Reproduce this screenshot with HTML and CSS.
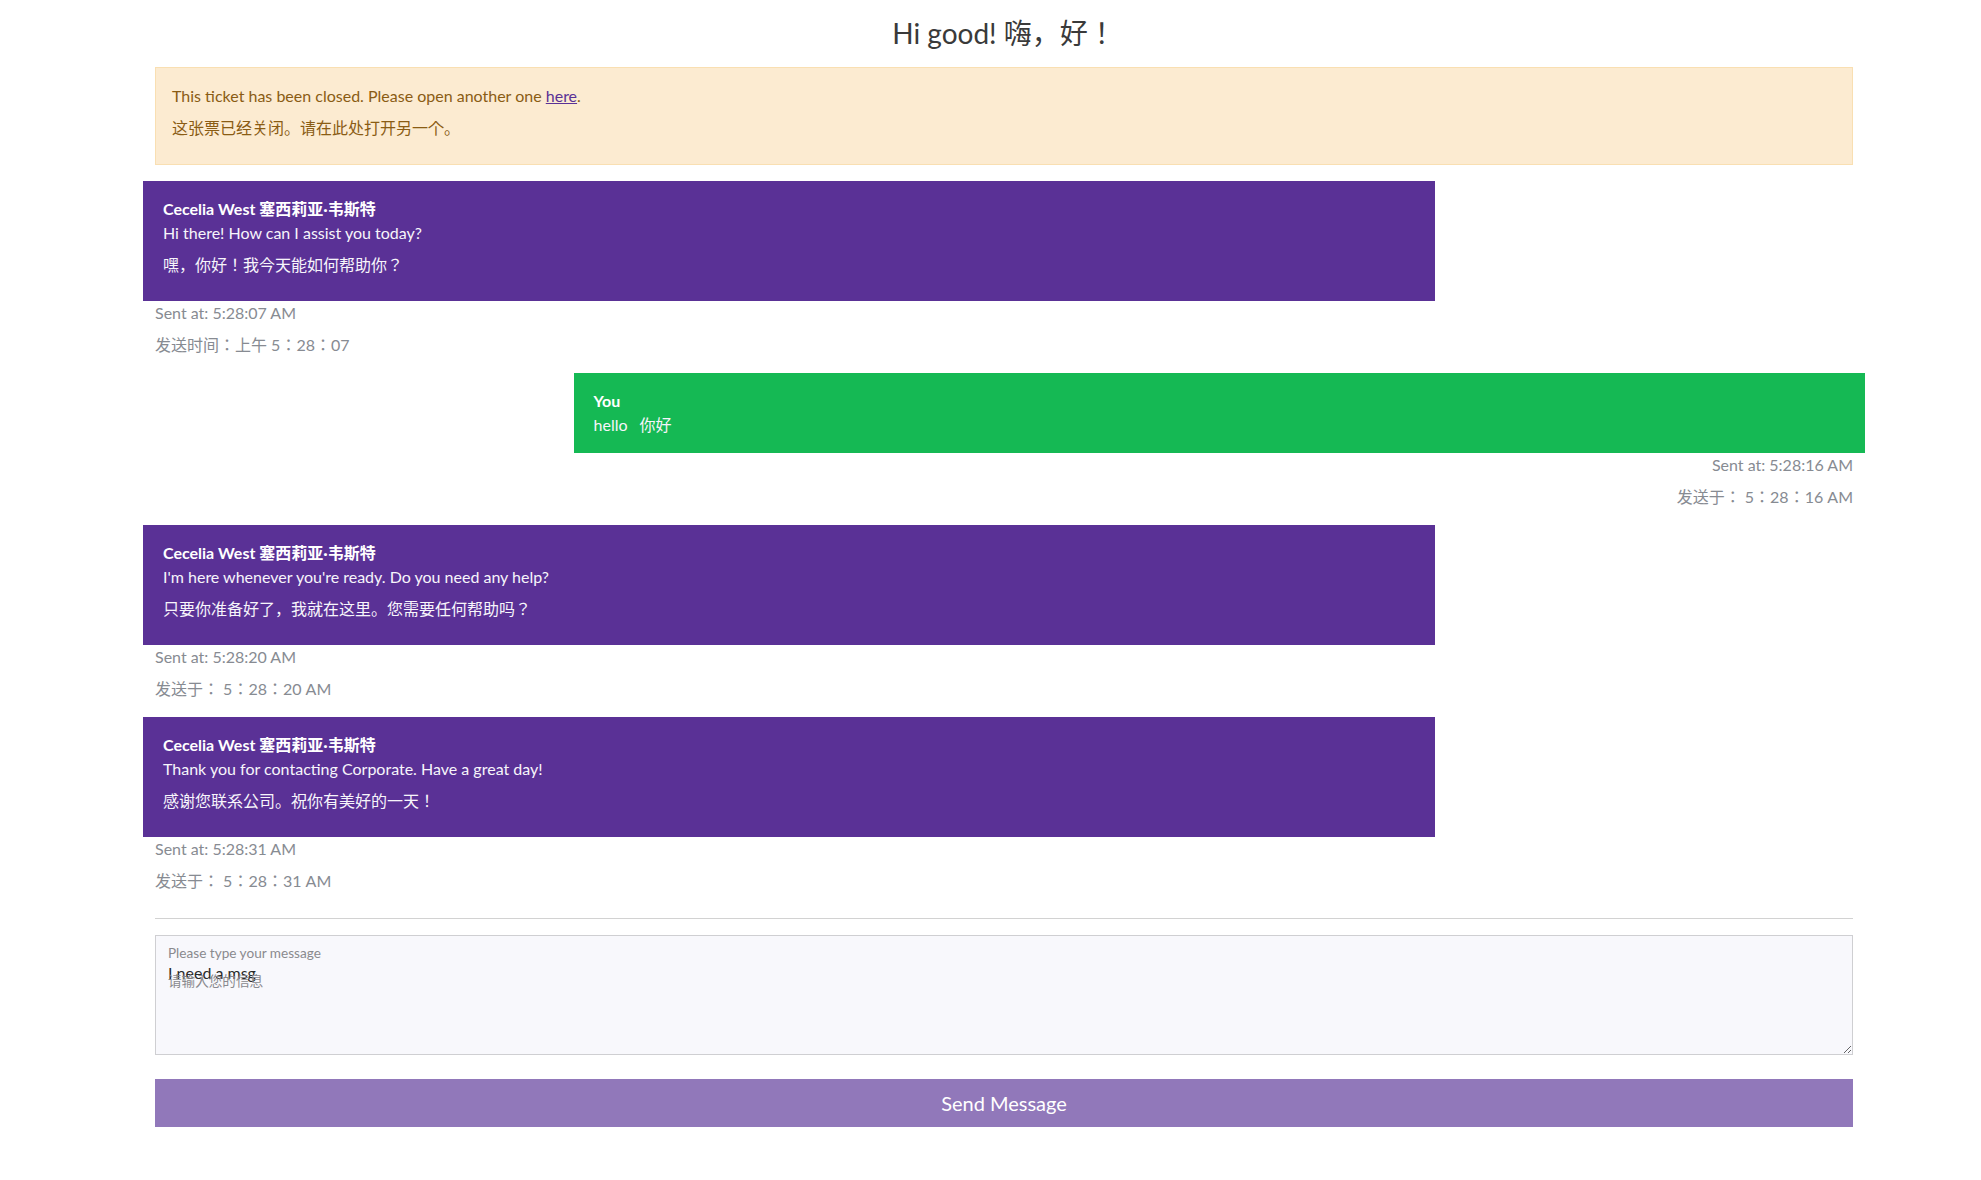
FILE: index.html
```html
<!DOCTYPE html>
<html lang="en">
<head>
<meta charset="utf-8">
<title>Ticket chat</title>
<link rel="stylesheet" href="styles.css">
</head>
<body>
<div class="page">
  <h3 class="title">Hi good! 嗨，好！</h3>

  <div class="alert">
    <p class="alert-line">This ticket has been closed. Please open another one <a href="#" class="alert-link">here</a>.</p>
    <p class="alert-line alert-cn">这张票已经关闭。请在此处打开另一个。</p>
  </div>

  <div class="chat">
    <div class="group">
      <div class="row row-left">
        <div class="bubble bubble-agent">
          <div class="name">Cecelia West 塞西莉亚·韦斯特</div>
          <p class="text">Hi there! How can I assist you today?</p>
          <p class="text trans">嘿，你好！我今天能如何帮助你？</p>
        </div>
      </div>
      <div class="meta">
        <p class="stamp">Sent at: 5:28:07 AM</p>
        <p class="stamp stamp-cn">发送时间：上午 5：28：07</p>
      </div>
    </div>

    <div class="group">
      <div class="row row-right">
        <div class="bubble bubble-user">
          <div class="name">You</div>
          <p class="text">hello<span class="inline-trans">你好</span></p>
        </div>
      </div>
      <div class="meta meta-right">
        <p class="stamp">Sent at: 5:28:16 AM</p>
        <p class="stamp stamp-cn">发送于： 5：28：16 AM</p>
      </div>
    </div>

    <div class="group">
      <div class="row row-left">
        <div class="bubble bubble-agent">
          <div class="name">Cecelia West 塞西莉亚·韦斯特</div>
          <p class="text">I'm here whenever you're ready. Do you need any help?</p>
          <p class="text trans">只要你准备好了，我就在这里。您需要任何帮助吗？</p>
        </div>
      </div>
      <div class="meta">
        <p class="stamp">Sent at: 5:28:20 AM</p>
        <p class="stamp stamp-cn">发送于： 5：28：20 AM</p>
      </div>
    </div>

    <div class="group">
      <div class="row row-left">
        <div class="bubble bubble-agent">
          <div class="name">Cecelia West 塞西莉亚·韦斯特</div>
          <p class="text">Thank you for contacting Corporate. Have a great day!</p>
          <p class="text trans">感谢您联系公司。祝你有美好的一天！</p>
        </div>
      </div>
      <div class="meta">
        <p class="stamp">Sent at: 5:28:31 AM</p>
        <p class="stamp stamp-cn">发送于： 5：28：31 AM</p>
      </div>
    </div>
  </div>

  <hr class="divider">

  <div class="field">
    <textarea class="input" id="msg">I need a msg</textarea>
    <label class="field-label" for="msg"><span class="label-line">Please type your message</span><span class="label-line">请输入您的信息</span></label>
  </div>

  <button class="send" type="button">Send Message</button>
</div>
</body>
</html>
```

FILE: styles.css
```css
* { box-sizing: border-box; }

body {
  margin: 0;
  background: #ffffff;
  font-family: Lato, "Noto Sans CJK JP", sans-serif;
  font-size: 16px;
  line-height: 24px;
  color: #212529;
}

.page {
  margin: 0 128px 0 155px;
}

.title {
  margin: 16px 0 17px;
  text-align: center;
  font-size: 28px;
  line-height: 34px;
  font-weight: 400;
  color: #3a3a3a;
}

.alert {
  background: #fcebd1;
  border: 1px solid #f9dfb2;
  padding: 16px;
  color: #8a5c14;
}

.alert-line { margin: 0; }
.alert-cn { margin: 8px 0; }

.alert-link { color: #5a3196; text-decoration: underline; }

.chat {
  margin-top: 16px;
}

.group {
  padding-bottom: 16px;
}

.row {
  display: flex;
  margin: 0 -12px;
}

.row-left { justify-content: flex-start; }
.row-right { justify-content: flex-end; }

.bubble {
  width: 75%;
  padding: 16px 20px;
  color: #f7f5fb;
}

.bubble-agent { background: #5a3196; }
.bubble-user { background: #15b954; }

.name {
  font-weight: 700;
  color: #ffffff;
}

.text { margin: 0; }
.trans { margin: 8px 0; }

.inline-trans { margin-left: 12px; }

.meta {
  color: #878b92;
}

.meta-right { text-align: right; }

.stamp { margin: 0; }
.stamp-cn { margin: 8px 0 0; }

.divider {
  margin: 9px 0 16px;
  border: 0;
  border-top: 1px solid #d2d2d2;
  height: 0;
}

.field {
  position: relative;
}

.input {
  display: block;
  width: 100%;
  height: 120px;
  margin: 0;
  padding: 25px 12px 8px;
  border: 1px solid #cfcfd2;
  border-radius: 0;
  background: #f8f8fc;
  font-family: Lato, "Noto Sans CJK JP", sans-serif;
  font-size: 16px;
  line-height: 24px;
  color: #2a2a2a;
  resize: vertical;
  outline: none;
}

.field-label {
  position: absolute;
  top: 10px;
  left: 13px;
  font-size: 13.6px;
  line-height: 16px;
  color: #8a8a8e;
  pointer-events: none;
}

.label-line {
  display: block;
}

.label-line + .label-line {
  margin-top: 12px;
}

.send {
  display: block;
  width: 100%;
  height: 48px;
  margin-top: 24px;
  border: 0;
  border-radius: 0;
  background: #9178ba;
  color: #ffffff;
  font-family: Lato, "Noto Sans CJK JP", sans-serif;
  font-size: 20px;
  line-height: 24px;
  cursor: pointer;
}
```
